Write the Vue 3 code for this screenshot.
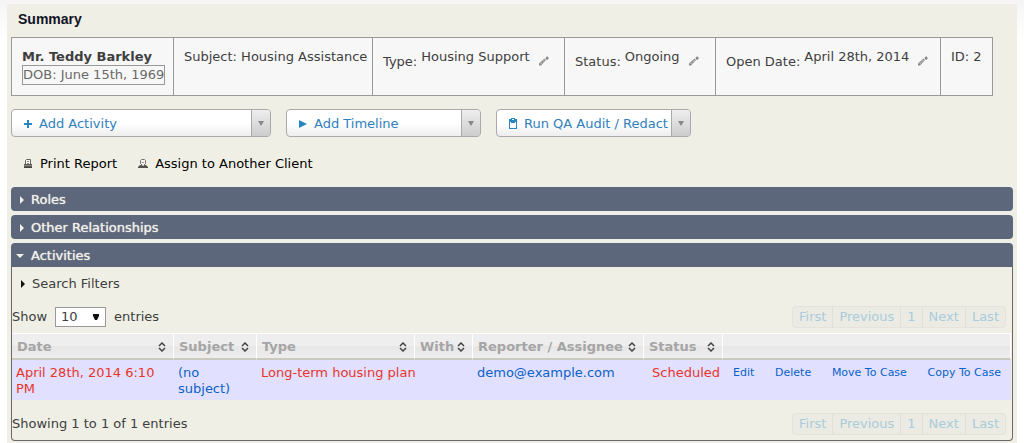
<script setup>
import { ref } from 'vue'

const details = [
  { label: 'Type:', value: 'Housing Support', width: 192 },
  { label: 'Status:', value: 'Ongoing', width: 151 },
  { label: 'Open Date:', value: 'April 28th, 2014', width: 225 },
]
const menus = [
  { icon: 'plus', text: 'Add Activity', size: 'wide' },
  { icon: 'play', text: 'Add Timeline', size: '' },
  { icon: 'clip', text: 'Run QA Audit / Redact', size: '' },
]
const columns = [
  { name: 'Date', width: 162 },
  { name: 'Subject', width: 83 },
  { name: 'Type', width: 158 },
  { name: 'With', width: 58 },
  { name: 'Reporter / Assignee', width: 171 },
  { name: 'Status', width: 79 },
]
const pages = ['First', 'Previous', '1', 'Next', 'Last']
const actions = ['Edit', 'Delete', 'Move To Case', 'Copy To Case']
const length = ref('10')
</script>

<template>
  <main class="panel">
    <h3>Summary</h3>
    <table class="summary">
      <colgroup>
        <col style="width: 162px" />
        <col style="width: 199px" />
        <col v-for="d in details" :key="d.label" :style="{ width: d.width + 'px' }" />
        <col style="width: 52px" />
      </colgroup>
      <tbody>
        <tr>
          <td>
            <strong>Mr. Teddy Barkley</strong>
            <span class="dob">DOB: June 15th, 1969</span>
          </td>
          <td>Subject: Housing Assistance</td>
          <td v-for="d in details" :key="d.label">
            <div class="detail">
              <span class="low">{{ d.label }}</span>
              <span>{{ d.value }}</span>
              <button class="edit low" :aria-label="'Edit ' + d.label">
                <svg width="10" height="10" viewBox="0 0 10 10">
                  <path d="M0 9.500V7.500L5.500 2.500 7 4 2 9.500z" fill="#8a8a8a" />
                  <path d="M1.800 7.700L5.700 3.800" stroke="#f0f0f0" stroke-width=".9" stroke-dasharray="1.200 .7" />
                  <path d="M6.500 1.500h1V.500h1.200v1h1v1.200h-1v1H7.500z" fill="#777" />
                </svg>
              </button>
            </div>
          </td>
          <td>ID: 2</td>
        </tr>
      </tbody>
    </table>

    <div class="menus">
      <div v-for="m in menus" :key="m.text" class="split" :class="m.size">
        <button class="main">
          <svg width="10" height="12" viewBox="0 0 10 12">
            <path v-if="m.icon === 'plus'" d="M4 2h2v3h3v2H6v3H4V7H1V5h3z" fill="#2786c2" />
            <path v-else-if="m.icon === 'play'" d="M1 2l8 4-8 4z" fill="#2786c2" />
            <path v-else fill-rule="evenodd" d="M1 1h2V0h4v1h2v10H1zM2 4v6h6V4H7v1H3V4zM4 1v1h2V1z" fill="#2786c2" />
          </svg>
          {{ m.text }}
        </button>
        <button class="caret" :aria-label="m.text + ' options'">
          <svg width="6" height="5" viewBox="0 0 6 5"><path d="M0 0h6L3 5z" fill="#888" /></svg>
        </button>
      </div>
    </div>

    <div class="links">
      <a href="#">
        <svg width="10" height="10" viewBox="0 0 10 10">
          <path d="M2.500 5V1.500l1-1h4V5" fill="#f7f7f0" stroke="#66645e" />
          <path d="M4 2.500h2M4 4.500h2" stroke="#888" />
          <path d="M1 5h8v3H1z" fill="#5c5a53" />
          <path d="M1 6.500h8" stroke="#aaa89f" stroke-width=".6" />
          <path d="M1 8h8v1H1z" fill="#45433c" />
        </svg>
        Print Report
      </a>
      <a href="#">
        <svg width="10" height="10" viewBox="0 0 10 10">
          <path d="M4 6L2.500 4.500v-3l1-1h3l1 1v3L6 6" fill="#f2f2ea" stroke="#77756e" />
          <path d="M4 3.500h2" stroke="#999" />
          <path d="M0 9V8l2-2h1.500l1.500 1 1.500-1H8l2 2v1z" fill="#54524b" />
        </svg>
        Assign to Another Client
      </a>
    </div>

    <button class="bar"><span class="right"></span>Roles</button>
    <button class="bar"><span class="right"></span>Other Relationships</button>
    <section>
      <button class="bar open"><span class="down"></span>Activities</button>
      <div class="body">
        <button class="filters"><span class="right"></span>Search Filters</button>
        <div class="tools">
          <label class="show">
            Show
            <span class="picker">
              <select v-model="length">
                <option>10</option>
                <option>25</option>
                <option>50</option>
              </select>
              <svg width="6" height="6" viewBox="0 0 6 6"><path d="M0 0h6v2L4 6H2L0 2z" fill="#111" /></svg>
            </span>
            entries
          </label>
          <nav class="pager"><button v-for="p in pages" :key="p" disabled>{{ p }}</button></nav>
        </div>
        <table class="list">
          <colgroup>
            <col v-for="c in columns" :key="c.name" :style="{ width: c.width + 'px' }" />
            <col />
          </colgroup>
          <thead>
            <tr>
              <th v-for="c in columns" :key="c.name">
                <div class="head">
                  {{ c.name }}
                  <svg width="8" height="10" viewBox="0 0 8 10">
                    <path d="M1 4l3-3 3 3M1 6l3 3 3-3" fill="none" stroke="#444" stroke-width="1.500" />
                  </svg>
                </div>
              </th>
              <th></th>
            </tr>
          </thead>
          <tbody>
            <tr>
              <td>April 28th, 2014 6:10 PM</td>
              <td><a href="#">(no subject)</a></td>
              <td class="type">Long-term housing plan</td>
              <td></td>
              <td><a href="#">demo@example.com</a></td>
              <td class="status">Scheduled</td>
              <td>
                <div class="actions"><a v-for="a in actions" :key="a" href="#">{{ a }}</a></div>
              </td>
            </tr>
          </tbody>
        </table>
        <div class="tools foot">
          <span>Showing 1 to 1 of 1 entries</span>
          <nav class="pager"><button v-for="p in pages" :key="p" disabled>{{ p }}</button></nav>
        </div>
      </div>
    </section>
  </main>
</template>

<style>
body {
  background: linear-gradient(#f5f5f5, #fff 40px) no-repeat #fff;
}
</style>

<style scoped>
.panel {
  box-sizing: border-box;
  margin: 4px 7px 0;
  padding: 0 4px 2px;
  border-radius: 3px 3px 0 0;
  background: #efefe5;
  color: #3e3e3e;
  font: 13px/18px Verdana, "DejaVu Sans", sans-serif;
}
button {
  display: flex;
  align-items: center;
  margin: 0;
  padding: 0;
  border: 0;
  background: none;
  color: inherit;
  font: inherit;
  cursor: pointer;
}
a {
  color: #0a62c9;
  text-decoration: none;
}
svg {
  flex: none;
}
h3 {
  margin: 0;
  padding: 0 7px 3px;
  color: #111325;
  font: bold 14px/30px "Liberation Sans", Arial, sans-serif;
}
.summary {
  border-collapse: collapse;
  table-layout: fixed;
  width: 982px;
  max-width: 100%;
  background: #f7f7f7;
}
.summary td {
  height: 37px;
  padding: 10px 0 10px 10px;
  border: 1px solid #999;
  vertical-align: top;
  white-space: nowrap;
}
.summary strong {
  display: block;
  line-height: 17px;
}
.dob {
  display: inline-block;
  border: 1px solid #999;
  color: #696969;
}
.detail {
  display: flex;
  gap: 4px;
}
.low {
  margin-top: 5px;
}
.edit {
  height: 16px;
  margin-left: 5px;
}
.menus {
  display: flex;
  gap: 15px;
  margin-top: 13px;
}
.split {
  display: flex;
  box-sizing: border-box;
  width: 195px;
  height: 28px;
  border: 1px solid #aaa;
  border-radius: 4px;
  background: linear-gradient(#fff 50%, #eee);
  overflow: hidden;
}
.wide {
  width: 260px;
}
.main {
  flex: 1;
  gap: 6px;
  padding: 2px 0 0 11px;
  color: #2f80bd;
  white-space: nowrap;
}
.caret {
  justify-content: center;
  width: 19px;
  border-left: 1px solid #aaa;
  background: linear-gradient(#eee, #ccc);
}
.links {
  display: flex;
  gap: 21px;
  margin: 15px 0 11px;
  padding-left: 12px;
  line-height: 24px;
}
.links a {
  display: flex;
  align-items: center;
  gap: 7px;
  color: #000;
}
.bar {
  width: 100%;
  height: 24px;
  margin-bottom: 4px;
  padding: 2px 0 0 9px;
  gap: 7px;
  border-radius: 4px;
  background: #5d677b;
  color: #f0f0e8;
  text-shadow: 0 0 1px #f0f0e8;
}
.open {
  margin: 0;
  padding-left: 5px;
  border-radius: 4px 4px 0 0;
}
.right {
  border: solid transparent;
  border-width: 4px 0 4px 4px;
  border-left-color: currentColor;
}
.down {
  border: solid transparent;
  border-width: 4px 4px 0;
  border-top-color: currentColor;
}
.body {
  padding: 5px 1px 5px 0;
  border: 1px solid #696969;
  border-top: 0;
  border-radius: 0 0 4px 4px;
}
.filters {
  height: 24px;
  padding-left: 9px;
  gap: 7px;
}
.filters .right {
  border-left-color: #111;
}
.tools {
  display: flex;
  align-items: center;
  justify-content: space-between;
  margin: 10px 5px 5px 0;
}
.foot {
  margin: 13px 5px 0 0;
}
.show {
  display: flex;
  align-items: center;
  gap: 8px;
}
.picker {
  position: relative;
}
.picker svg {
  position: absolute;
  right: 7px;
  top: 7px;
}
select {
  display: block;
  appearance: none;
  box-sizing: border-box;
  width: 51px;
  height: 20px;
  padding: 0 5px;
  border: 1px solid #999;
  border-radius: 0;
  background: #fff;
  color: inherit;
  font: inherit;
}
.pager {
  display: flex;
  border: 1px solid #e3e3dc;
  border-radius: 4px;
  background: #ebebe3;
}
.pager button {
  height: 20px;
  padding: 0 6px;
  color: #a9cbdc;
}
.pager button + button {
  border-left: 1px solid #e0e0da;
}
.list {
  border-collapse: separate;
  border-spacing: 0;
  table-layout: fixed;
  width: 100%;
}
th {
  height: 22px;
  padding: 2px 7px 0 5px;
  border-top: 1px solid #fff;
  border-right: 1px solid #fff;
  border-bottom: 2px solid #c9c9bf;
  background: linear-gradient(#eee 50%, #e6e6e6 50%, #eee);
  color: #a5a5a5;
  white-space: nowrap;
}
.head {
  display: flex;
  align-items: center;
  justify-content: space-between;
}
.list td {
  height: 32px;
  padding: 5px 2px 3px 4px;
  background: #e1e1ff;
  color: #e7352c;
  line-height: 16px;
  vertical-align: top;
}
.list .type {
  white-space: nowrap;
}
.list .status {
  padding-left: 8px;
}
.actions {
  display: flex;
  justify-content: space-between;
  padding: 0 8px 0 6px;
  font-size: 11px;
  white-space: nowrap;
}
</style>
